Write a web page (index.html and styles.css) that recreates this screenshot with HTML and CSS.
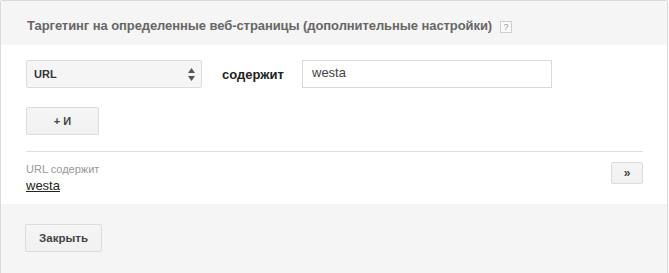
FILE: index.html
```html
<!DOCTYPE html>
<html lang="ru">
<head>
<meta charset="utf-8">
<title>Таргетинг</title>
<link rel="stylesheet" href="styles.css">
</head>
<body>
<div class="panel">
  <div class="panel-head">
    <span class="title">Таргетинг на определенные веб-страницы (дополнительные настройки)</span>
    <span class="help">?</span>
  </div>
  <div class="panel-body">
    <div class="rule-row">
      <div class="select">
        <span class="select-text">URL</span>
        <svg class="select-arrows" width="7" height="13" viewBox="0 0 7 13"><path d="M3.5 0 L7 5 L0 5 Z M0 8 L7 8 L3.5 13 Z" fill="#555"/></svg>
      </div>
      <span class="op">содержит</span>
      <div class="text-input">westa</div>
    </div>
    <div class="add-row">
      <button class="btn btn-and">+ И</button>
    </div>
    <div class="divider"></div>
    <div class="summary">
      <div class="summary-info">
        <div class="summary-label">URL содержит</div>
        <a class="summary-value" href="#">westa</a>
      </div>
      <button class="btn btn-more">»</button>
    </div>
  </div>
  <div class="panel-foot">
    <button class="btn btn-close">Закрыть</button>
  </div>
</div>
</body>
</html>
```

FILE: styles.css
```css
html, body {
  margin: 0;
  padding: 0;
  background: #ffffff;
  overflow: hidden;
}
body {
  font-family: "Liberation Sans", Arial, sans-serif;
  color: #333;
}
.panel {
  width: 666px;
  border: 1px solid #d9d9d9;
  border-radius: 2px;
  background: #fff;
}
.panel-head {
  height: 44px;
  box-sizing: border-box;
  padding: 17px 26px 0 26px;
  background: #f5f5f5;
  display: flex;
  align-items: flex-start;
}
.title {
  font-size: 13px;
  line-height: 16px;
  font-weight: bold;
  letter-spacing: -0.08px;
  color: #666;
}
.help {
  margin-left: 8px;
  margin-top: 3px;
  width: 10px;
  height: 10px;
  border: 1px solid #cfcfcf;
  background: #fafafa;
  color: #999;
  font-size: 9px;
  line-height: 10px;
  text-align: center;
}
.panel-body {
  padding: 15px 24px 10px 25px;
}
.rule-row {
  display: flex;
  align-items: center;
  height: 28px;
}
.select {
  width: 176px;
  height: 28px;
  box-sizing: border-box;
  border: 1px solid #dcdcdc;
  border-radius: 2px;
  background: #f5f5f5;
  display: flex;
  align-items: center;
  justify-content: space-between;
  padding: 0 6px 0 7px;
}
.select-text {
  font-size: 11px;
  font-weight: bold;
  color: #333;
}
.select-arrows {
  display: block;
}
.op {
  width: 100px;
  box-sizing: border-box;
  padding-left: 20px;
  font-size: 13px;
  font-weight: bold;
  color: #222;
}
.text-input {
  width: 250px;
  height: 28px;
  box-sizing: border-box;
  border: 1px solid #d9d9d9;
  padding: 0 9px;
  font-size: 13px;
  line-height: 24px;
  color: #444;
}
.add-row {
  margin-top: 19px;
}
.btn {
  font-family: "Liberation Sans", Arial, sans-serif;
  font-weight: bold;
  font-size: 11px;
  color: #444;
  background: linear-gradient(#f5f5f5, #f1f1f1);
  border: 1px solid #dcdcdc;
  border-radius: 2px;
  box-sizing: border-box;
  padding: 0;
  margin: 0;
  display: block;
}
.btn-and {
  width: 73px;
  height: 28px;
}
.divider {
  margin-top: 16px;
  height: 1px;
  background: #e0e0e0;
}
.summary {
  padding-top: 10px;
  display: flex;
  justify-content: space-between;
  align-items: flex-start;
}
.summary-label {
  font-size: 11px;
  line-height: 14px;
  color: #999;
}
.summary-value {
  display: inline-block;
  margin-top: 2px;
  font-size: 13px;
  line-height: 16px;
  color: #222;
  text-decoration: underline;
}
.btn-more {
  width: 32px;
  height: 22px;
  font-size: 12px;
}
.panel-foot {
  background: #f5f5f5;
  padding: 20px 24px 30px 24px;
}
.btn-close {
  width: 77px;
  height: 28px;
  font-size: 11.5px;
}
```
